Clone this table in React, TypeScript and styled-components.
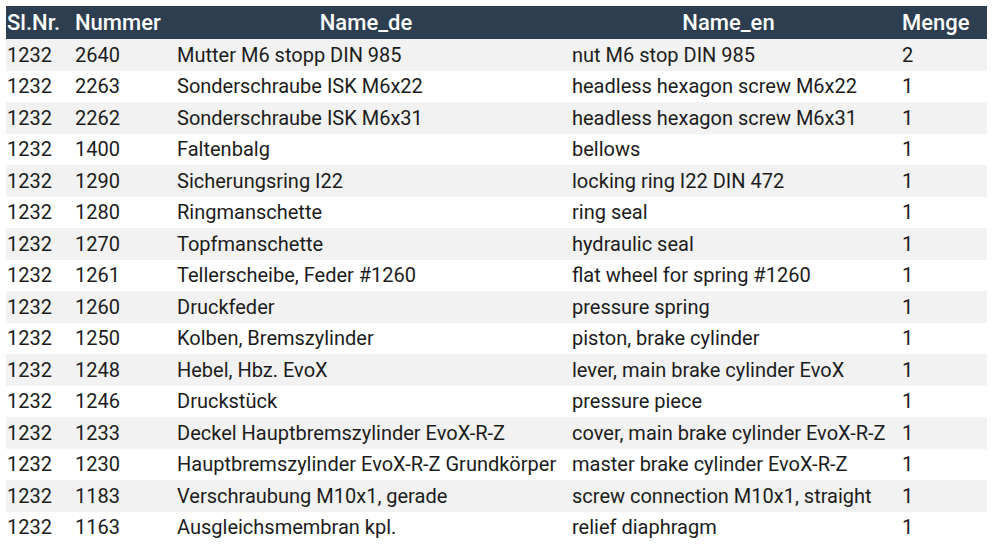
import styled, { createGlobalStyle } from "styled-components";

const GlobalStyle = createGlobalStyle`
  html, body {
    margin: 0;
    padding: 0;
    background: #fff;
  }
  body {
    font-family: Roboto, "Liberation Sans", sans-serif;
  }
`;

const Page = styled.div`
  padding: 6px 6px 0 6px;
`;

const PartsTable = styled.table`
  width: 981px;
  border-collapse: collapse;
  table-layout: fixed;
  font-size: 20px;
  color: #1c1c1c;
`;

const Col = styled.col<{ $w: number }>`
  width: ${(p) => p.$w}px;
`;

const HeadCell = styled.th<{ $center?: boolean }>`
  background: #2c3e50;
  color: #fff;
  font-size: 22px;
  font-weight: 500;
  height: 33px;
  padding: 0 16px 0 1px;
  text-align: ${(p) => (p.$center ? "center" : "left")};
  white-space: nowrap;
`;

const Row = styled.tr`
  height: 31.5px;

  &:nth-child(odd) {
    background: #f2f2f2;
  }
`;

const Cell = styled.td`
  padding: 0 0 0 1px;
  white-space: nowrap;
  overflow: visible;
`;

type Part = [string, string, string, string, string];

const parts: Part[] = [
  ["1232", "2640", "Mutter M6 stopp DIN 985", "nut M6 stop DIN 985", "2"],
  ["1232", "2263", "Sonderschraube ISK M6x22", "headless hexagon screw M6x22", "1"],
  ["1232", "2262", "Sonderschraube ISK M6x31", "headless hexagon screw M6x31", "1"],
  ["1232", "1400", "Faltenbalg", "bellows", "1"],
  ["1232", "1290", "Sicherungsring I22", "locking ring I22 DIN 472", "1"],
  ["1232", "1280", "Ringmanschette", "ring seal", "1"],
  ["1232", "1270", "Topfmanschette", "hydraulic seal", "1"],
  ["1232", "1261", "Tellerscheibe, Feder #1260", "flat wheel for spring #1260", "1"],
  ["1232", "1260", "Druckfeder", "pressure spring", "1"],
  ["1232", "1250", "Kolben, Bremszylinder", "piston, brake cylinder", "1"],
  ["1232", "1248", "Hebel, Hbz. EvoX", "lever, main brake cylinder EvoX", "1"],
  ["1232", "1246", "Druckstück", "pressure piece", "1"],
  ["1232", "1233", "Deckel Hauptbremszylinder EvoX-R-Z", "cover, main brake cylinder EvoX-R-Z", "1"],
  ["1232", "1230", "Hauptbremszylinder EvoX-R-Z Grundkörper", "master brake cylinder EvoX-R-Z", "1"],
  ["1232", "1183", "Verschraubung M10x1, gerade", "screw connection M10x1, straight", "1"],
  ["1232", "1163", "Ausgleichsmembran kpl.", "relief diaphragm", "1"],
];

const columns = [
  { title: "Sl.Nr.", width: 68 },
  { title: "Nummer", width: 102 },
  { title: "Name_de", width: 395, center: true },
  { title: "Name_en", width: 330, center: true },
  { title: "Menge", width: 86 },
];

export default function App() {
  return (
    <Page>
      <GlobalStyle />
      <PartsTable>
        <colgroup>
          {columns.map((c) => (
            <Col key={c.title} $w={c.width} />
          ))}
        </colgroup>
        <thead>
          <tr>
            {columns.map((c) => (
              <HeadCell key={c.title} $center={c.center}>
                {c.title}
              </HeadCell>
            ))}
          </tr>
        </thead>
        <tbody>
          {parts.map((p) => (
            <Row key={p[1]}>
              {p.map((v, i) => (
                <Cell key={i}>{v}</Cell>
              ))}
            </Row>
          ))}
        </tbody>
      </PartsTable>
    </Page>
  );
}
